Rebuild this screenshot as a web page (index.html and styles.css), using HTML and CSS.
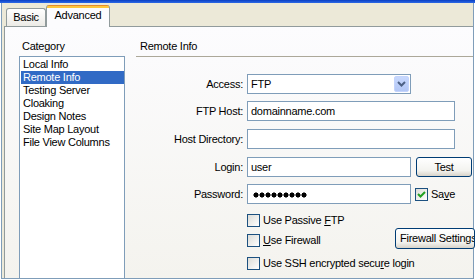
FILE: index.html
```html
<!DOCTYPE html>
<html lang="en">
<head>
    <meta charset="UTF-8">
    <title>Site Definition - Advanced</title>
    <link rel="stylesheet" href="styles.css">
</head>
<body>
    <div class="titlebar"></div>

    <div class="dialog">
        <div class="tabs">
            <div class="tab">Basic</div>
            <div class="tab active">Advanced</div>
        </div>

        <div class="tab-panel">
            <div class="category">
                <div class="category-title">Category</div>
                <ul class="category-list">
                    <li>Local Info</li>
                    <li class="selected">Remote Info</li>
                    <li>Testing Server</li>
                    <li>Cloaking</li>
                    <li>Design Notes</li>
                    <li>Site Map Layout</li>
                    <li>File View Columns</li>
                </ul>
            </div>

            <div class="settings">
                <div class="settings-title">Remote Info</div>

                <div class="form">
                    <div class="row">
                        <span class="field-label">Access:</span>
                        <div class="select">
                            <span>FTP</span>
                            <span class="select-arrow">
                                <svg width="9" height="6" viewBox="0 0 9 6"><path d="M1 1 L4.5 4.5 L8 1" fill="none" stroke="#4d6185" stroke-width="2"/></svg>
                            </span>
                        </div>
                    </div>

                    <div class="row row-host">
                        <span class="field-label">FTP Host:</span>
                        <div class="textbox wide">domainname.com</div>
                    </div>

                    <div class="row row-dir">
                        <span class="field-label">Host Directory:</span>
                        <div class="textbox wide"></div>
                    </div>

                    <div class="row row-login">
                        <span class="field-label">Login:</span>
                        <div class="textbox">user</div>
                        <div class="button test-button">Test</div>
                    </div>

                    <div class="row row-password">
                        <span class="field-label">Password:</span>
                        <div class="textbox"><span class="password-dots"></span></div>
                        <span class="checkbox checked">
                            <svg width="11" height="11" viewBox="0 0 11 11"><path d="M2 5 L4.5 7.5 L9 3" fill="none" stroke="#21a121" stroke-width="2"/></svg>
                        </span>
                        <span class="check-label">Sa<u>v</u>e</span>
                    </div>

                    <div class="check-row row-passive">
                        <span class="checkbox"></span>
                        <span class="check-label">Use Passive <u>F</u>TP</span>
                    </div>

                    <div class="check-row row-firewall">
                        <span class="checkbox"></span>
                        <span class="check-label"><u>U</u>se Firewall</span>
                        <div class="button firewall-button">Firewall Settings</div>
                    </div>

                    <div class="check-row row-ssh">
                        <span class="checkbox"></span>
                        <span class="check-label">Use SSH encrypted secu<u>r</u>e login</span>
                    </div>
                </div>
            </div>
        </div>
    </div>
</body>
</html>
```

FILE: styles.css
```css
* {
    margin: 0;
    padding: 0;
    box-sizing: border-box;
}

body {
    width: 475px;
    height: 280px;
    overflow: hidden;
    background: #ffffff;
    font-family: "Liberation Sans", Arial, sans-serif;
    font-size: 11px;
    letter-spacing: -0.25px;
    color: #000;
}

.titlebar {
    height: 3px;
    background: linear-gradient(#0a3fc4, #2d6ae6);
}

.dialog {
    margin-left: 1px;
    width: 473px;
    height: 276px;
    background: #ece9d8;
    border-left: 1px solid #7f9db9;
    border-right: 1px solid #7f9db9;
    border-bottom: 1px solid #7f9db9;
    padding-left: 2px;
    display: flex;
    flex-direction: column;
}

/* tabs */
.tabs {
    height: 23px;
    display: flex;
    align-items: flex-end;
    padding-left: 2px;
}

.tab {
    width: 40px;
    height: 18px;
    border: 1px solid #919b9c;
    border-bottom: none;
    border-radius: 3px 3px 0 0;
    background: linear-gradient(#ffffff, #ecebe6);
    text-align: center;
    line-height: 17px;
}

.tab.active {
    position: relative;
    z-index: 1;
    width: 64px;
    height: 22px;
    margin-bottom: -1px;
    padding-top: 4px;
    line-height: 13px;
    border-top: none;
    background: linear-gradient(#e68b2c 0, #e68b2c 1px, #ffc73c 1px, #ffc73c 3px, #fcfcfe 3px);
}

.tab-panel {
    flex: 1;
    display: flex;
    border-top: 1px solid #919b9c;
    border-left: 1px solid #919b9c;
    background: linear-gradient(#fcfcfe, #f4f3ee);
    min-height: 0;
}

/* category list */
.category {
    width: 131px;
    padding: 13px 0 0 14px;
    display: flex;
    flex-direction: column;
}

.category-title {
    line-height: 13px;
    padding-left: 3px;
    margin-bottom: 3px;
}

.category-list {
    flex: 1;
    width: 106px;
    list-style: none;
    background: #fff;
    border: 1px solid #7f9db9;
    border-bottom: none;
    padding-top: 1px;
}

.category-list li {
    margin-left: 1px;
    padding-left: 2px;
    line-height: 13px;
    white-space: nowrap;
}

.category-list li.selected {
    background: #316ac5;
    color: #fff;
}

/* settings */
.settings {
    flex: 1;
    padding-top: 13px;
}

.settings-title {
    line-height: 13px;
    padding: 0 0 3px 4px;
    border-bottom: 1px solid #aca899;
}

.form {
    padding-top: 17px;
}

.row {
    display: flex;
    align-items: center;
    height: 20px;
}

.row-host { margin-top: 7px; }
.row-dir { margin-top: 8px; }
.row-login { margin-top: 8px; }
.row-password { margin-top: 7px; }

.field-label {
    width: 111px;
    padding-right: 4px;
    text-align: right;
    white-space: nowrap;
}

.select,
.textbox {
    width: 164px;
    height: 20px;
    background: #fff;
    border: 1px solid #7f9db9;
    padding-left: 3px;
    line-height: 18px;
}

.textbox.wide {
    width: 208px;
}

.select {
    display: flex;
    align-items: center;
}

.select-arrow {
    margin-left: auto;
    margin-right: 1px;
    width: 15px;
    height: 16px;
    border: 1px solid #c4d4fc;
    border-radius: 2px;
    background: linear-gradient(#c8d8fd, #b3c7f6);
    display: flex;
    align-items: center;
    justify-content: center;
}

.password-dots {
    display: inline-block;
    width: 54px;
    height: 6px;
    margin-left: 2px;
    vertical-align: middle;
    background: radial-gradient(circle at 3px 3px, #000 2.3px, transparent 2.8px);
    background-size: 6px 6px;
}

.button {
    height: 20px;
    border: 1px solid #003c74;
    border-radius: 3px;
    background: linear-gradient(#ffffff, #f3f3ef 70%, #d8d3c9);
    line-height: 18px;
    white-space: nowrap;
}

.test-button {
    width: 56px;
    margin-left: 5px;
    text-align: center;
}

.checkbox {
    width: 13px;
    height: 13px;
    flex: none;
    border: 1px solid #1c5180;
    background: linear-gradient(135deg, #dcdcd7, #ffffff);
    display: flex;
    align-items: center;
    justify-content: center;
}

.row-password .checkbox {
    margin-left: 4px;
}

.check-label {
    margin-left: 3px;
    line-height: 13px;
    white-space: nowrap;
}

.check-row {
    display: flex;
    align-items: center;
    height: 13px;
    padding-left: 111px;
}

.row-passive { margin-top: 10px; }

.row-firewall {
    margin-top: 1px;
    height: 21px;
    align-items: flex-start;
}

.row-firewall .checkbox {
    margin-top: 6px;
}

.row-firewall .check-label {
    margin-top: 6px;
}

.firewall-button {
    height: 21px;
    width: 80px;
    margin-left: auto;
    margin-right: -2px;
    padding-left: 4px;
    overflow: hidden;
    line-height: 19px;
}

.row-ssh { margin-top: 8px; }
```
